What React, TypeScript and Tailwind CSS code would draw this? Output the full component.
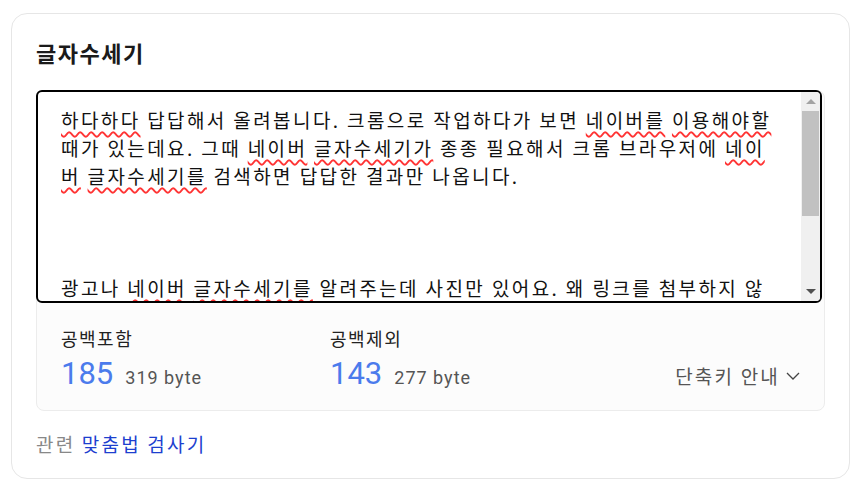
const kr = {fontFamily: '"Noto Sans CJK KR", "Noto Sans", sans-serif'};

type Seg = {t: string; u?: boolean};

const lines: Seg[][] = [
  [
    {t: '하다하다', u: true},
    {t: ' 답답해서 올려봅니다. 크롬으로 작업하다가 보면 '},
    {t: '네이버를', u: true},
    {t: ' '},
    {t: '이용해야할', u: true},
  ],
  [
    {t: '때가 있는데요. 그때 '},
    {t: '네이버', u: true},
    {t: ' '},
    {t: '글자수세기가', u: true},
    {t: ' 종종 필요해서 크롬 브라우저에 '},
    {t: '네이', u: true},
  ],
  [
    {t: '버', u: true},
    {t: ' '},
    {t: '글자수세기를', u: true},
    {t: ' 검색하면 답답한 결과만 나옵니다.'},
  ],
  [],
  [],
  [],
  [
    {t: '광고나 '},
    {t: '네이버', u: true},
    {t: ' '},
    {t: '글자수세기를', u: true},
    {t: ' 알려주는데 사진만 있어요. 왜 링크를 첨부하지 않'},
  ],
];

function Stat({label, count, bytes}: {label: string; count: number; bytes: number}) {
  return (
    <div className="w-[269px]">
      <div className="text-[18px] leading-6 tracking-[1.5px] text-[#222]" style={kr}>
        {label}
      </div>
      <div className="flex items-baseline gap-3 mt-[6px]" style={{fontFamily: 'Roboto, "Liberation Sans", sans-serif'}}>
        <span className="text-[31px] leading-9 text-[#4b7bec]">{count}</span>
        <span className="text-[18px] tracking-[1px] text-[#555]">{bytes} byte</span>
      </div>
    </div>
  );
}

export default function App() {
  return (
    <div className="w-[862px] h-[493px] bg-white pt-[13px] pl-[11px]">
      <div className="w-[839px] h-[466px] border border-[#e6e6e6] rounded-[16px] px-6 pt-[24px]">
        <h1 className="text-[22px] leading-7 font-bold tracking-[1.5px] text-[#1a1a1a]" style={kr}>
          글자수세기
        </h1>

        <div className="mt-[24px] w-[789px] border border-[#ececec] rounded-lg bg-[#fcfcfc]">
          <div className="flex h-[213px] -m-px mr-[2px] bg-white border-2 border-black rounded-md overflow-hidden">
            <div
              className="flex-1 pl-[23px] pt-[14px] overflow-hidden text-[19px] leading-[28px] tracking-[2.4px] text-[#111] whitespace-nowrap"
              style={kr}
            >
              {lines.map((segs, i) => (
                <div key={i} className="h-[28px]">
                  {segs.map((s, j) =>
                    s.u ? (
                      <span
                        key={j}
                        className="underline decoration-wavy decoration-[#ff3434] decoration-[1.5px] underline-offset-[3px]"
                      >
                        {s.t}
                      </span>
                    ) : (
                      <span key={j}>{s.t}</span>
                    ),
                  )}
                </div>
              ))}
            </div>
            <div className="w-[19px] bg-[#f0f0f0] flex flex-col items-center">
              <div className="h-[19px] flex items-center justify-center">
                <div className="w-0 h-0 border-l-[5px] border-r-[5px] border-b-[5px] border-l-transparent border-r-transparent border-b-[#a3a3a3]" />
              </div>
              <div className="w-[17px] h-[105px] bg-[#c1c1c1]" />
              <div className="flex-1" />
              <div className="h-[19px] flex items-center justify-center">
                <div className="w-0 h-0 border-l-[5px] border-r-[5px] border-t-[5px] border-l-transparent border-r-transparent border-t-[#505050]" />
              </div>
            </div>
          </div>

          <div className="flex items-end px-6 pt-[24px] pb-[18px]">
            <Stat label="공백포함" count={185} bytes={319} />
            <Stat label="공백제외" count={143} bytes={277} />
            <div className="ml-auto flex items-center gap-[6px] pb-[2px] text-[19px] tracking-[2.2px] text-[#555]" style={kr}>
              단축키 안내
              <svg width="14" height="8" viewBox="0 0 14 8" fill="none" stroke="#444" strokeWidth="1.3">
                <polyline points="1,1 7,7 13,1" />
              </svg>
            </div>
          </div>
        </div>

        <div className="mt-[19px] text-[19px] leading-7 tracking-[2.2px]" style={kr}>
          <span className="text-[#888]">관련</span>{' '}
          <span className="text-[#1d3fcf]">맞춤법 검사기</span>
        </div>
      </div>
    </div>
  );
}
